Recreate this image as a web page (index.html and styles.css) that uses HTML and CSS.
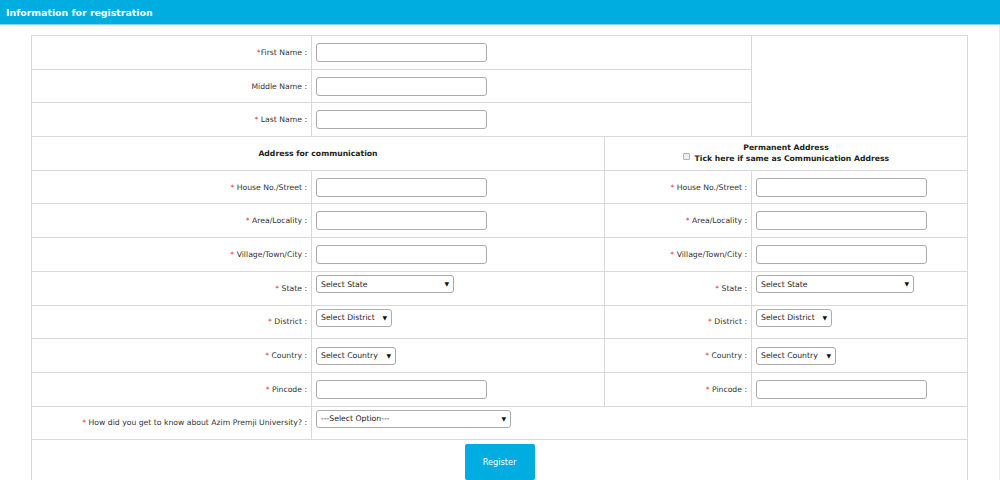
FILE: index.html
```html
<!DOCTYPE html>
<html lang="en">
<head>
<meta charset="utf-8">
<title>Information for registration</title>
<link rel="stylesheet" href="styles.css">
</head>
<body>
<header class="topbar"><h1>Information for registration</h1></header>
<main class="wrap">
<table class="reg">
<colgroup><col class="c1"><col class="c2"><col class="c3"><col class="c4"></colgroup>
<tr>
  <td class="lbl"><span class="req">*</span>First Name :</td>
  <td class="fld" colspan="2"><input class="txt" type="text"></td>
  <td rowspan="3"></td>
</tr>
<tr>
  <td class="lbl">Middle Name :</td>
  <td class="fld" colspan="2"><input class="txt" type="text"></td>
</tr>
<tr>
  <td class="lbl"><span class="req">*</span> Last Name :</td>
  <td class="fld" colspan="2"><input class="txt" type="text"></td>
</tr>
<tr class="head">
  <td colspan="2">Address for communication</td>
  <td colspan="2">Permanent Address<br><input class="chk" type="checkbox"> Tick here if same as Communication Address</td>
</tr>
<tr>
  <td class="lbl"><span class="req">*</span> House No./Street :</td>
  <td class="fld"><input class="txt" type="text"></td>
  <td class="lbl"><span class="req">*</span> House No./Street :</td>
  <td class="fld"><input class="txt" type="text"></td>
</tr>
<tr>
  <td class="lbl"><span class="req">*</span> Area/Locality :</td>
  <td class="fld"><input class="txt" type="text"></td>
  <td class="lbl"><span class="req">*</span> Area/Locality :</td>
  <td class="fld"><input class="txt" type="text"></td>
</tr>
<tr>
  <td class="lbl"><span class="req">*</span> Village/Town/City :</td>
  <td class="fld"><input class="txt" type="text"></td>
  <td class="lbl"><span class="req">*</span> Village/Town/City :</td>
  <td class="fld"><input class="txt" type="text"></td>
</tr>
<tr>
  <td class="lbl"><span class="req">*</span> State :</td>
  <td class="fld"><span class="sel up w-state"><select><option>Select State</option></select></span></td>
  <td class="lbl"><span class="req">*</span> State :</td>
  <td class="fld"><span class="sel up w-state2"><select><option>Select State</option></select></span></td>
</tr>
<tr>
  <td class="lbl"><span class="req">*</span> District :</td>
  <td class="fld"><span class="sel up w-dist"><select><option>Select District</option></select></span></td>
  <td class="lbl"><span class="req">*</span> District :</td>
  <td class="fld"><span class="sel up w-dist"><select><option>Select District</option></select></span></td>
</tr>
<tr>
  <td class="lbl"><span class="req">*</span> Country :</td>
  <td class="fld"><span class="sel w-country"><select><option>Select Country</option></select></span></td>
  <td class="lbl"><span class="req">*</span> Country :</td>
  <td class="fld"><span class="sel w-country"><select><option>Select Country</option></select></span></td>
</tr>
<tr>
  <td class="lbl"><span class="req">*</span> Pincode :</td>
  <td class="fld"><input class="txt" type="text"></td>
  <td class="lbl"><span class="req">*</span> Pincode :</td>
  <td class="fld"><input class="txt" type="text"></td>
</tr>
<tr>
  <td class="lbl"><span class="req">*</span> How did you get to know about Azim Premji University? :</td>
  <td class="fld" colspan="3"><span class="sel up w-opt"><select><option>---Select Option---</option></select></span></td>
</tr>
<tr>
  <td class="submit" colspan="4"><button type="button" class="btn">Register</button></td>
</tr>
</table>
</main>
</body>
</html>
```

FILE: styles.css
```css
html, body {
  margin: 0;
  padding: 0;
  background: #fff;
}

body {
  font-family: "DejaVu Sans", Verdana, sans-serif;
  font-size: 7.7px;
  color: #333;
}

.topbar {
  height: 24px;
  background: #00ade1;
  border-bottom: 1px solid #8ed5ee;
  display: flex;
  align-items: center;
  padding-left: 6px;
}

.topbar h1 {
  margin: 0;
  font-size: 9.4px;
  font-weight: bold;
  color: #fff;
}

.wrap {
  box-sizing: border-box;
  width: 1000px;
  padding: 10px 0 0 31px;
  border-right: 1px solid #ececec;
  min-height: 455px;
}

table.reg {
  border-collapse: collapse;
  table-layout: fixed;
  width: 936px;
}

col.c1 { width: 280px; }
col.c2 { width: 293px; }
col.c3 { width: 147px; }
col.c4 { width: 216px; }

table.reg td {
  border: 1px solid #d9d9d9;
  height: 32.7px;
  padding: 0;
  vertical-align: middle;
}

table.reg td.lbl {
  text-align: right;
  padding-right: 4px;
  white-space: nowrap;
}

table.reg td.fld {
  padding-left: 4px;
}

.req {
  color: #e5383b;
}

.txt {
  display: block;
  box-sizing: border-box;
  width: 171px;
  height: 19px;
  margin: 0;
  border: 1px solid #ababab;
  border-radius: 3px;
  background: #fff;
}

.sel {
  position: relative;
  display: block;
}

.sel.up {
  margin-bottom: 8px;
}

.sel select {
  -webkit-appearance: none;
  appearance: none;
  display: block;
  box-sizing: border-box;
  width: 100%;
  height: 18px;
  margin: 0;
  padding: 0 0 0 4px;
  border: 1px solid #ababab;
  border-radius: 3px;
  background: #fff;
  font-family: inherit;
  font-size: 7.7px;
  color: #222;
}

.sel::after {
  content: "\25BC";
  position: absolute;
  right: 5px;
  top: 50%;
  transform: translateY(-55%);
  font-size: 6px;
  line-height: 1;
  color: #111;
  pointer-events: none;
}

.w-state { width: 138px; }
.w-state2 { width: 158px; }
.w-dist { width: 76px; }
.w-country { width: 80px; }
.w-opt { width: 195px; }

.head td {
  text-align: center;
  font-weight: bold;
  color: #222;
  line-height: 9.7px;
}

.chk {
  -webkit-appearance: none;
  appearance: none;
  box-sizing: border-box;
  width: 7px;
  height: 7px;
  margin: 0 2px 0 0;
  border: 1px solid #b3b3b3;
  border-radius: 1px;
  background: #efefef;
  vertical-align: 1px;
}

table.reg td.submit {
  text-align: center;
  padding: 4px 0 10px;
}

.btn {
  width: 70px;
  height: 36px;
  border: 0;
  border-radius: 2px;
  background: #00ade1;
  color: #fff;
  font-family: inherit;
  font-size: 8.2px;
}
```
